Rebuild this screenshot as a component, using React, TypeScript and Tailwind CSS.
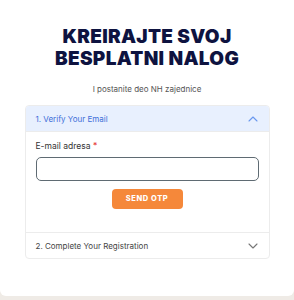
import React from 'react';

function Chevron({ up }: { up?: boolean }) {
  return (
    <svg width="10" height="6" viewBox="0 0 10 6" fill="none" className={up ? 'text-[#6a98ef]' : 'text-[#777]'}>
      <path d={up ? 'M1 5 5 1l4 4' : 'M1 1l4 4 4-4'} stroke="currentColor" strokeWidth="1.1" strokeLinecap="round" strokeLinejoin="round" />
    </svg>
  );
}

export default function App() {
  return (
    <div className="min-h-[300px] bg-[#efebe6] font-['Inter',sans-serif]">
      <div className="bg-white rounded-b-[6px] h-[296px] flex flex-col items-center pt-[26px]">
        <h1 className="text-[19px] leading-[22px] font-black text-[#0e1340] text-center tracking-[0.3px]">
          KREIRAJTE SVOJ
          <br />
          BESPLATNI NALOG
        </h1>
        <p className="mt-[14px] text-[8px] leading-[10px] text-[#555]">I postanite deo NH zajednice</p>

        <div className="mt-[11px] w-[245px] border border-[#ececec] rounded-[4px] overflow-hidden">
          <div className="h-[26px] bg-[#e8f0fe] flex items-center justify-between pl-[10px] pr-[11px] border-b border-[#ececec]">
            <span className="text-[8px] text-[#3d6fd9]">1. Verify Your Email</span>
            <Chevron up />
          </div>
          <div className="px-[10px] pt-[9px] pb-[23px] border-b border-[#ececec]">
            <div className="text-[8.5px] leading-[10px] text-[#333]">
              E-mail adresa <span className="text-[#e53935]">*</span>
            </div>
            <div className="mt-[6px] h-[24px] border-[1.5px] border-[#5f6b73] rounded-[5px]" />
            <div className="flex justify-center mt-[8px]">
              <button className="w-[71px] h-[20px] rounded-[4px] bg-[#f5883a] text-white text-[7.5px] font-extrabold tracking-[0.6px]">
                SEND OTP
              </button>
            </div>
          </div>
          <div className="h-[25px] flex items-center justify-between pl-[10px] pr-[11px]">
            <span className="text-[8px] text-[#444]">2. Complete Your Registration</span>
            <Chevron />
          </div>
        </div>
      </div>
    </div>
  );
}
